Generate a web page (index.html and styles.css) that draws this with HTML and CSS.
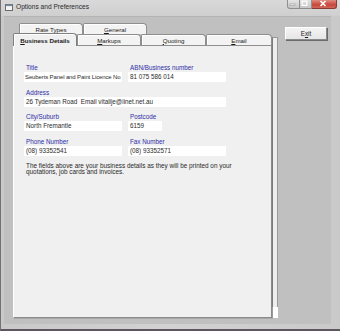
FILE: index.html
```html
<!DOCTYPE html>
<html>
<head>
<meta charset="utf-8">
<link rel="stylesheet" href="styles.css">
</head>
<body>
<div class="window">
  <div class="titlebar">
    <svg class="appicon" width="8" height="8" viewBox="0 0 8 8"><rect x="0.5" y="1.5" width="7" height="6" fill="#f4f4f4" stroke="#6a6a6a"/><rect x="0.5" y="1.5" width="7" height="1.6" fill="#7a8aa0"/></svg>
    <span class="title">Options and Preferences</span>
    <div class="controls">
      <span class="ctl min"><svg width="11" height="9" viewBox="0 0 11 9"><rect x="3" y="5" width="5" height="1.5" fill="#fff" stroke="#666" stroke-width="0.4"/></svg></span>
      <span class="ctl max"><svg width="11" height="9" viewBox="0 0 11 9"><rect x="3.2" y="2.2" width="4.6" height="4.2" fill="none" stroke="#fff" stroke-width="1.2"/></svg></span>
      <span class="ctl close"><svg width="24" height="9" viewBox="0 0 24 9"><path d="M9.5 2 L14.5 7 M14.5 2 L9.5 7" stroke="#fff" stroke-width="1.6"/></svg></span>
    </div>
  </div>
  <div class="client">
    <div class="tabctl">
      <div class="tabarea">
        <div class="tabrow row1">
          <div class="tab"><u>R</u>ate Types</div>
          <div class="tab"><u>G</u>eneral</div>
        </div>
        <div class="tabrow row2">
          <div class="tab selected"><u>B</u>usiness Details</div>
          <div class="tab"><u>M</u>arkups</div>
          <div class="tab wide"><u>Q</u>uoting</div>
          <div class="tab wider"><u>E</u>mail</div>
        </div>
        <div class="panel">
          <div class="fields">
            <div class="field">
              <div class="label">Title</div>
              <div class="input tight">Seuberts Panel and Paint Licence No l</div>
            </div>
            <div class="field">
              <div class="label">ABN/Business number</div>
              <div class="input">81 075 586 014</div>
            </div>
            <div class="field full">
              <div class="label">Address</div>
              <div class="input">26 Tydeman Road&nbsp; Email vitalije@iinet.net.au</div>
            </div>
            <div class="field">
              <div class="label">City/Suburb</div>
              <div class="input">North Fremantle</div>
            </div>
            <div class="field">
              <div class="label">Postcode</div>
              <div class="input short">6159</div>
            </div>
            <div class="field">
              <div class="label">Phone Number</div>
              <div class="input">(08) 93352541</div>
            </div>
            <div class="field">
              <div class="label">Fax Number</div>
              <div class="input">(08) 93352571</div>
            </div>
          </div>
          <p class="note">The fields above are your business details as they will be printed on your quotations, job cards and invoices.</p>
        </div>
      </div>
      <div class="strip">
        <div class="strip-bar"></div>
        <div class="strip-box"></div>
      </div>
    </div>
    <div class="side">
      <div class="exit">E<u>x</u>it</div>
    </div>
  </div>
</div>
</body>
</html>
```

FILE: styles.css
```css
html, body {
  margin: 0;
  padding: 0;
  background: #6b5a6e;
}
body {
  width: 340px;
  height: 331px;
  overflow: hidden;
  font-family: "Liberation Sans", Arial, sans-serif;
}
.window {
  width: 340px;
  height: 331px;
  box-sizing: border-box;
  background: linear-gradient(to right, #c9c9c9, #d2d2d2 50%, #c9c9c9);
  border-left: 1px solid #7a6d7c;
  border-bottom: 2px solid #5e5560;
  display: flex;
  flex-direction: column;
}
.titlebar {
  height: 16px;
  flex: none;
  display: flex;
  align-items: center;
  padding-left: 4px;
  background: linear-gradient(to bottom, #d9d9d9, #cfcfcf);
  position: relative;
}
.appicon {
  flex: none;
  margin-top: -2px;
}
.title {
  margin-left: 3px;
  margin-top: -3px;
  font-size: 6.6px;
  color: #2a2a2a;
  white-space: nowrap;
}
.controls {
  position: absolute;
  top: 0;
  right: 3px;
  display: flex;
}
.ctl {
  display: block;
  height: 9px;
  box-sizing: border-box;
  border: 1px solid #8f8f8f;
  border-top: none;
  background: linear-gradient(to bottom, #e4e4e4, #c6c6c6);
}
.ctl svg { display: block; margin: -1px; }
.ctl.min { width: 13px; border-radius: 0 0 0 3px; }
.ctl.max { width: 12px; border-left: none; }
.ctl.close {
  width: 25px;
  border-left: none;
  border-radius: 0 0 3px 0;
  background: linear-gradient(to bottom, #e08a80, #c7463a 60%, #d0685b);
  border-color: #8a3a33;
}
.client {
  flex: 1;
  margin: 0 9px 5px 3px;
  background: #c0c0c0;
  border-top: 1px solid #b4b4b4;
  display: flex;
  padding: 6px 0 0 9px;
}
.tabctl {
  display: flex;
  flex: none;
}
.tabarea {
  width: 259px;
  display: flex;
  flex-direction: column;
}
.tabrow {
  display: flex;
  height: 11px;
  flex: none;
}
.row1 {
  margin-left: 6px;
}
.tab {
  width: 64px;
  box-sizing: border-box;
  border: 1px solid #8e8e8e;
  border-bottom: none;
  border-radius: 2px 4px 0 0;
  background: #f3f3f3;
  font-size: 6.2px;
  color: #1a1a1a;
  display: flex;
  align-items: center;
  justify-content: center;
  white-space: nowrap;
  box-shadow: inset 1px 1px 0 #ffffff;
}
.tab.wide { width: 65px; }
.tab.wider { width: 66px; }
.tab u { text-decoration: underline; text-underline-offset: 0.5px; }
.tab.selected {
  font-weight: bold;
  height: 13px;
  margin-top: -1px;
  margin-bottom: -1px;
  position: relative;
  z-index: 1;
  background: #f0f0f0;
  border-color: #7f7f7f;
}
.panel {
  height: 273px;
  box-sizing: border-box;
  background: #f0f0f0;
  border-top: 1px solid #8e8e8e;
  border-left: 1px solid #ffffff;
  border-right: 1px solid #8a8a8a;
  border-bottom: 1px solid #8a8a8a;
  box-shadow: 1px 1px 0 #a8a8a8;
  padding: 18px 0 0 10px;
}
.fields {
  display: grid;
  grid-template-columns: 98px 98px;
  column-gap: 6px;
  row-gap: 6.5px;
}
.field.full {
  grid-column: 1 / span 2;
}
.label {
  font-size: 6.3px;
  line-height: 7px;
  height: 7px;
  color: #2e2ea6;
  padding-left: 2px;
  white-space: nowrap;
}
.input {
  margin-top: 1px;
  height: 10px;
  background: #ffffff;
  font-size: 6.3px;
  line-height: 10px;
  color: #2c2c2c;
  padding-left: 2px;
  white-space: nowrap;
  overflow: hidden;
}
.input.tight {
  font-size: 6px;
  letter-spacing: -0.12px;
  padding-left: 1px;
}
.input.short {
  width: 32px;
}
.note {
  margin: 7px 0 0 2px;
  width: 232px;
  font-size: 6.4px;
  line-height: 6.8px;
  color: #2a2a2a;
}
.strip {
  display: flex;
  flex-direction: column;
  margin-top: 14px;
  width: 6px;
}
.strip-bar {
  height: 270px;
  box-sizing: border-box;
  background: #eeeeee;
  border-left: 1px solid #7c7c7c;
  border-right: 1px solid #9a9a9a;
  border-top: 1px solid #9a9a9a;
}
.strip-box {
  height: 11px;
  width: 5px;
  background: #ffffff;
  border-left: 1px solid #9a9a9a;
}
.side {
  padding: 4px 0 0 7px;
}
.exit {
  width: 42px;
  height: 13px;
  box-sizing: border-box;
  border: 1px solid #8a8a8a;
  border-top-color: #ffffff;
  border-left-color: #ffffff;
  box-shadow: 1px 1px 0 #6a6a6a;
  background: linear-gradient(to bottom, #f4f4f4, #e6e6e6);
  font-size: 6.3px;
  color: #1a1a1a;
  display: flex;
  align-items: center;
  justify-content: center;
}
```
